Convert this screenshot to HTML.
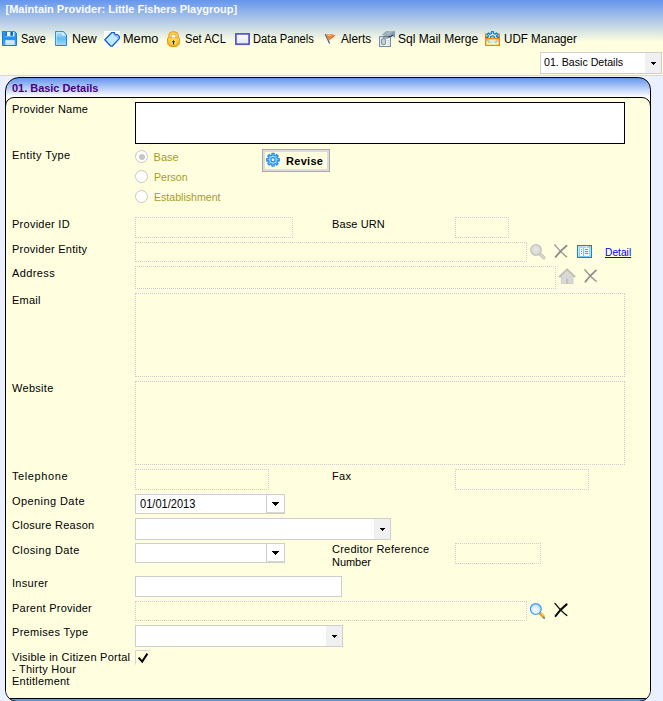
<!DOCTYPE html>
<html><head><meta charset="utf-8">
<style>
html,body{margin:0;padding:0;}
body{width:663px;height:701px;overflow:hidden;position:relative;background:#eaf0ff;font-family:"Liberation Sans",sans-serif;font-size:11px;color:#000;}
.abs{position:absolute;}
#top{left:0;top:0;width:663px;height:75px;background:linear-gradient(#6495ed 0px,#ffffe0 42px,#ffffe0 75px);}
#title{left:5.5px;top:3px;font-weight:bold;font-size:11px;color:#fbfcff;white-space:nowrap;line-height:13px;letter-spacing:0;}
.tb{transform-origin:0 0;top:31px;height:16px;line-height:16px;font-size:12px;white-space:nowrap;color:#000;}
#sel{left:540px;top:52px;width:122px;height:22px;background:#fff;border:1px solid #cfcfcf;box-sizing:border-box;}
#sel span{position:absolute;left:2.6px;top:3px;font-size:11px;line-height:13px;transform:scaleX(0.966);transform-origin:0 0;white-space:nowrap;}
.ddb{position:absolute;right:0;top:0;width:16px;height:100%;background:#f0f0f0;}
.arr{position:absolute;width:0;height:0;border-left:3.5px solid transparent;border-right:3.5px solid transparent;border-top:4px solid #000;}
#panel{left:5px;top:77px;width:646px;height:625px;box-sizing:border-box;border:1px solid #000;border-radius:14px 12.5px 12px 12px;background:linear-gradient(#6495ed 0px,#ffffff 19px,#ffffff 300px,#6495ed 300px);overflow:hidden;}
#body{left:-1px;top:19px;width:646px;height:602px;box-sizing:border-box;border:1px solid #000;border-radius:9px 9px 0 0;background:#ffffe0;}
#ptitle{left:12px;top:82px;font-weight:bold;color:#4b0082;line-height:13px;letter-spacing:-0.03px;white-space:nowrap;}
#bottom{display:none}
.lb{position:absolute;left:12px;line-height:13px;letter-spacing:0.3px;white-space:nowrap;}
.dot{position:absolute;box-sizing:border-box;border:1px dotted #cdcdd7;}
.inp{position:absolute;box-sizing:border-box;border:1px solid #cecece;background:#fff;}
.rad{position:absolute;width:13px;height:13px;box-sizing:border-box;border:1px solid #c9c9bd;border-radius:50%;background:#fff;}
.rl{position:absolute;left:153.6px;color:#a69d18;line-height:13px;transform-origin:0 0;white-space:nowrap;}
.arrs i{position:absolute;height:1px;background:#000;display:block;}
</style></head><body>
<div class="abs" style="left:5px;top:76px;width:646px;height:625px;background:#eef3ff"></div>
<div id="top" class="abs"></div>
<div class="abs" style="left:0;top:75px;width:663px;height:1px;background:#d8d8dc"></div>
<div id="title" class="abs">[Maintain Provider: Little Fishers Playgroup]</div>

<div class="abs tb" style="left:20.6px;transform:scaleX(0.9088)">Save</div>
<div class="abs tb" style="left:71.9px;transform:scaleX(1.0292)">New</div>
<div class="abs tb" style="left:122.9px;transform:scaleX(1.0601)">Memo</div>
<div class="abs tb" style="left:185.1px;transform:scaleX(0.9273)">Set ACL</div>
<div class="abs tb" style="left:253.2px;transform:scaleX(0.9312)">Data Panels</div>
<div class="abs tb" style="left:340.9px;transform:scaleX(0.9837)">Alerts</div>
<div class="abs tb" style="left:397.6px;transform:scaleX(1.0025)">Sql Mail Merge</div>
<div class="abs tb" style="left:503.7px;transform:scaleX(0.9668)">UDF Manager</div>

<div id="sel" class="abs"><span>01. Basic Details</span><div class="ddb" style="width:16px"></div></div>

<div id="panel" class="abs"><div id="body" class="abs"></div></div>
<div id="ptitle" class="abs">01. Basic Details</div>

<div class="lb" style="top:103px;letter-spacing:0.21px">Provider Name</div>
<div class="abs" style="left:135px;top:102px;width:490px;height:42px;box-sizing:border-box;border:1px solid #000;background:#fff"></div>

<div class="lb" style="top:149px;letter-spacing:0.40px">Entity Type</div>
<div class="rad" style="left:135px;top:150px"><div class="abs" style="left:2.5px;top:2.5px;width:6px;height:6px;border-radius:50%;background:#c6c6c6"></div></div>
<div class="rad" style="left:135px;top:170px"></div>
<div class="rad" style="left:135px;top:190px"></div>
<div class="rl" style="top:150.5px;transform:scaleX(1.0)">Base</div>
<div class="rl" style="top:170.5px;transform:scaleX(0.965)">Person</div>
<div class="rl" style="top:190.5px;transform:scaleX(0.962)">Establishment</div>
<div class="abs" id="revise" style="left:262px;top:149px;width:68px;height:23px;box-sizing:border-box;border:1px solid #a9a9a9;background:#ffffe0;"><div class="abs" style="left:0;top:0;right:0;bottom:0;border:2px solid #dcdcdc"></div><span class="abs m" style="left:23px;top:5px;font-weight:bold;line-height:13px;letter-spacing:0.3px;white-space:nowrap">Revise</span></div>

<div class="lb" style="top:218px;letter-spacing:0.26px">Provider ID</div>
<div class="dot" style="left:135px;top:217px;width:158px;height:21px"></div>
<div class="lb" style="left:332px;top:218px;letter-spacing:0.10px">Base URN</div>
<div class="dot" style="left:455px;top:217px;width:54px;height:21px"></div>

<div class="lb" style="top:243px;letter-spacing:0.25px">Provider Entity</div>
<div class="dot" style="left:135px;top:242px;width:392px;height:20px"></div>
<div class="abs m" style="left:605px;top:246px;color:#0000ff;text-decoration:underline;line-height:13px;transform:scaleX(0.93);transform-origin:0 0;white-space:nowrap">Detail</div>

<div class="lb" style="top:267px;letter-spacing:0.40px">Address</div>
<div class="dot" style="left:135px;top:266px;width:421px;height:23px"></div>

<div class="lb" style="top:294px;letter-spacing:0.25px">Email</div>
<div class="dot" style="left:135px;top:293px;width:490px;height:84px"></div>
<div class="lb" style="top:382px;letter-spacing:0.30px">Website</div>
<div class="dot" style="left:135px;top:381px;width:490px;height:84px"></div>

<div class="lb" style="top:470px;letter-spacing:0.60px">Telephone</div>
<div class="dot" style="left:135px;top:469px;width:134px;height:21px"></div>
<div class="lb" style="left:332px;top:470px;letter-spacing:0.30px">Fax</div>
<div class="dot" style="left:455px;top:469px;width:134px;height:21px"></div>

<div class="lb" style="top:495px;letter-spacing:0.42px">Opening Date</div>
<div class="inp" style="left:135px;top:494px;width:150px;height:20px"><span class="abs m" style="left:4.3px;top:2.5px;line-height:13px;font-size:12px;transform:scaleX(0.922);transform-origin:0 0;white-space:nowrap">01/01/2013</span><div class="ddb" style="width:18px;border-left:1px solid #cecece;border-bottom:1px solid #d6d6d6;background:#fff;box-sizing:border-box"></div></div>

<div class="lb" style="top:519px;letter-spacing:0.25px">Closure Reason</div>
<div class="inp" style="left:135px;top:518px;width:256px;height:22px"><div class="ddb"></div></div>

<div class="lb" style="top:544px;letter-spacing:0.40px">Closing Date</div>
<div class="inp" style="left:135px;top:543px;width:150px;height:20px"><div class="ddb" style="width:18px;border-left:1px solid #cecece;border-bottom:1px solid #d6d6d6;background:#fff;box-sizing:border-box"></div></div>
<div class="lb" style="left:332px;top:543px;letter-spacing:0.25px">Creditor Reference<br><span style="letter-spacing:-0.05px">Number</span></div>
<div class="dot" style="left:455px;top:543px;width:86px;height:21px"></div>

<div class="lb" style="top:577px;letter-spacing:0.30px">Insurer</div>
<div class="inp" style="left:135px;top:576px;width:207px;height:21px"></div>

<div class="lb" style="top:602px;letter-spacing:0.24px">Parent Provider</div>
<div class="dot" style="left:135px;top:601px;width:392px;height:20px"></div>

<div class="lb" style="top:626px;letter-spacing:0.30px">Premises Type</div>
<div class="inp" style="left:135px;top:625px;width:208px;height:22px"><div class="ddb"></div></div>

<div class="lb" style="top:651px;line-height:12px;letter-spacing:0.24px">Visible in Citizen Portal<br>- Thirty Hour<br>Entitlement</div>

<div class="arrs"><i style="left:651px;top:62px;width:5px"></i><i style="left:652px;top:63px;width:3px"></i><i style="left:653px;top:64px;width:1px"></i><i style="left:272px;top:502px;width:7px"></i><i style="left:273px;top:503px;width:5px"></i><i style="left:274px;top:504px;width:3px"></i><i style="left:275px;top:505px;width:1px"></i><i style="left:380px;top:528px;width:5px"></i><i style="left:381px;top:529px;width:3px"></i><i style="left:382px;top:530px;width:1px"></i><i style="left:272px;top:551px;width:7px"></i><i style="left:273px;top:552px;width:5px"></i><i style="left:274px;top:553px;width:3px"></i><i style="left:275px;top:554px;width:1px"></i><i style="left:332px;top:635px;width:5px"></i><i style="left:333px;top:636px;width:3px"></i><i style="left:334px;top:637px;width:1px"></i></div>
<!--ICONS-->
<svg class="abs" style="left:0;top:0;pointer-events:none" width="663" height="701" viewBox="0 0 663 701">
<defs>
<linearGradient id="gSave" x1="0" y1="0" x2="0" y2="1"><stop offset="0" stop-color="#2a9af0"/><stop offset="0.5" stop-color="#2096f0"/><stop offset="1" stop-color="#4eaef6"/></linearGradient>
<linearGradient id="gNew" x1="0" y1="0" x2="0" y2="1"><stop offset="0" stop-color="#c4e8fb"/><stop offset="0.5" stop-color="#62bcf6"/><stop offset="1" stop-color="#a8dcfa"/></linearGradient>
<linearGradient id="gLock" x1="0" y1="0" x2="0" y2="1"><stop offset="0" stop-color="#fdd560"/><stop offset="1" stop-color="#f5a81a"/></linearGradient>
<linearGradient id="gPan" x1="0" y1="0" x2="0" y2="1"><stop offset="0" stop-color="#ffffff"/><stop offset="1" stop-color="#e2e2ff"/></linearGradient>
<radialGradient id="gMagB" cx="0.45" cy="0.6" r="0.7"><stop offset="0" stop-color="#ffffff"/><stop offset="0.6" stop-color="#cfe8fb"/><stop offset="1" stop-color="#7cc0f5"/></radialGradient>
<radialGradient id="gMagG" cx="0.45" cy="0.45" r="0.7"><stop offset="0" stop-color="#e6e6e2"/><stop offset="1" stop-color="#d2d2ce"/></radialGradient>
<linearGradient id="gArr" x1="0" y1="0" x2="1" y2="0.6"><stop offset="0" stop-color="#6e8da4"/><stop offset="0.55" stop-color="#a9bcc9"/><stop offset="0.8" stop-color="#7d9aae"/><stop offset="1" stop-color="#6a899f"/></linearGradient>
</defs>

<!-- Save -->
<g transform="translate(2,31)">
<path d="M0.5 0.5 H12.6 L14.5 2.4 V14.5 H0.5Z" fill="url(#gSave)" stroke="#0b80e2" stroke-width="1"/>
<rect x="3.2" y="0.8" width="9.2" height="4.6" fill="#eaf6ff"/>
<rect x="3.2" y="0.8" width="1.7" height="4.2" fill="#0868cc"/>
<rect x="8.4" y="0.8" width="2.5" height="4" fill="#0560c8"/>
<rect x="3.4" y="9.2" width="9.2" height="4.6" fill="#e4f3fe"/>
<rect x="3.4" y="10.6" width="9.2" height="0.7" fill="#b4dcf8"/>
<rect x="3.4" y="12.2" width="9.2" height="0.7" fill="#b4dcf8"/>
</g>

<!-- New -->
<g transform="translate(55,31)">
<path d="M0.5 0.5 H8.2 L11.5 3.8 V14.5 H0.5Z" fill="url(#gNew)" stroke="#1584de" stroke-width="1"/>
<path d="M7.4 1.2 L10.8 4.6 H7.4Z" fill="#e4f6fe"/>
<path d="M1.3 1.3 H7.3 M1.3 1.3 V13.7" stroke="#d9f1fd" stroke-width="0.7" fill="none"/>
</g>

<!-- Memo -->
<rect x="104" y="31" width="16" height="16" fill="#ffffff"/>
<path d="M104.8 39.8 L111.6 32.7 H114.6 V34.6 H117.6 L119.4 36.6 V38.4 L112.2 46.2 H110.8 Z" fill="#bfeafa" stroke="#0c5fd6" stroke-width="1.3" stroke-linejoin="round"/>
<path d="M113.5 34 L118 37.6" stroke="#9d9ee8" stroke-width="1.2"/>

<!-- Lock -->
<g transform="translate(167,31)">
<path d="M2.9 7.5 V5.2 C2.9 2.8 4.2 1.9 6.5 1.9 C8.8 1.9 10.1 2.8 10.1 5.2 V7.5" fill="none" stroke="#eb9c0e" stroke-width="3.4"/>
<path d="M2.9 7.5 V5.2 C2.9 2.9 4.2 2 6.5 2 C8.8 2 10.1 2.9 10.1 5.2 V7.5" fill="none" stroke="#fdd660" stroke-width="1.4"/>
<rect x="4.7" y="3.9" width="3.6" height="2.5" fill="#eef6f2"/>
<path d="M0.6 7.2 H12.4 V11.6 C12.4 14.6 10 15.6 6.5 15.6 C3 15.6 0.6 14.6 0.6 11.6Z" fill="url(#gLock)" stroke="#e7940a" stroke-width="1"/>
<path d="M1.2 7.9 H11.8" stroke="#fde27a" stroke-width="0.9"/>
<circle cx="6.5" cy="11.2" r="2.7" fill="#ffe45a" opacity="0.9"/>
<path d="M6.5 9.2 L8 10.8 L7.1 11.6 V13.6 H5.9 V11.6 L5 10.8Z" fill="#222a44"/>
</g>

<!-- Data Panels -->
<rect x="235.9" y="33.9" width="13.2" height="10.3" fill="url(#gPan)" stroke="#5a5ad0" stroke-width="1.8"/>

<!-- Alerts flag -->
<path d="M325.3 34.2 L329.6 43.4" stroke="#28489c" stroke-width="1.1" fill="none"/>
<path d="M326 34.6 C327.4 33.8 328.8 35 330.4 34.2 C331.8 33.6 333.4 35 335.2 35.2 L329.4 40.4 L327.8 39.4Z" fill="#f0853a"/>
<path d="M327.6 35.4 C328.8 35 329.8 35.8 331 35.4" stroke="#fac49a" stroke-width="0.9" fill="none"/>
<path d="M335.2 35.2 L331.6 38.4" stroke="#b0603c" stroke-width="0.8" fill="none"/>

<!-- Sql mail merge -->
<rect x="379.6" y="36.7" width="10.8" height="9.8" fill="#ffffff" stroke="#6c8ca6" stroke-width="1.1"/>
<rect x="381.4" y="38.6" width="4.2" height="6.1" rx="1.6" fill="#c2ced6" stroke="#66829a" stroke-width="0.9"/>
<path d="M387.2 40.5 h2 M387.2 42.4 h2 M387.2 44.3 h2" stroke="#b0bfcc" stroke-width="0.8"/>
<path d="M382.4 37.4 L386.6 33 L390 37.2 L387.4 39.2 Z" fill="#4c6476" opacity="0.5"/>
<path d="M382 34.8 L386.2 31.1 H392.8 L394.9 30.8 V37.8 L392.6 35.9 C391 36.6 389.6 36.7 388.2 36.7 L386.6 33.8 L383.2 35.8 Z" fill="url(#gArr)"/>
<path d="M388.4 36.9 C390 36.7 391.8 36.3 392.8 35.4" stroke="#1e2a34" stroke-width="1" fill="none"/>

<!-- UDF Manager -->
<g transform="translate(485,31)">
<rect x="0.5" y="2.9" width="14" height="11.6" fill="#ffa32c" stroke="#f5850d" stroke-width="1"/>
<rect x="1.2" y="4" width="1.8" height="1.2" fill="#ffe24a"/>
<rect x="1.4" y="8.2" width="12.2" height="5.5" fill="#fff9a4"/>
<rect x="0.5" y="7.1" width="14" height="1.1" fill="#f5850d"/>
<clipPath id="cpU"><rect x="0" y="-1" width="15" height="8.1"/></clipPath>
<clipPath id="cpL"><rect x="0" y="8.5" width="15" height="3.6"/></clipPath>
<g clip-path="url(#cpU)">
<path d="M6.55 2.60 L6.49 0.68 L8.51 0.68 L8.45 2.60 L10.08 3.27 L11.40 1.88 L12.82 3.30 L11.43 4.62 L12.10 6.25 L14.02 6.19 L14.02 8.21 L12.10 8.15 L11.43 9.78 L12.82 11.10 L11.40 12.52 L10.08 11.13 L8.45 11.80 L8.51 13.72 L6.49 13.72 L6.55 11.80 L4.92 11.13 L3.60 12.52 L2.18 11.10 L3.57 9.78 L2.90 8.15 L0.98 8.21 L0.98 6.19 L2.90 6.25 L3.57 4.62 L2.18 3.30 L3.60 1.88 L4.92 3.27Z" fill="#eaf6ff" stroke="#1583dc" stroke-width="1.3" stroke-linejoin="round"/>
<circle cx="7.5" cy="7.2" r="2.3" fill="#ffc21e" stroke="#1583dc" stroke-width="1.3"/>
</g>
<g clip-path="url(#cpL)" opacity="0.6"><g transform="translate(0,16.4) scale(1,-1)">
<path d="M6.73 3.48 L6.68 1.86 L8.32 1.86 L8.27 3.48 L9.59 4.02 L10.69 2.84 L11.86 4.01 L10.68 5.11 L11.22 6.43 L12.84 6.38 L12.84 8.02 L11.22 7.97 L10.68 9.29 L11.86 10.39 L10.69 11.56 L9.59 10.38 L8.27 10.92 L8.32 12.54 L6.68 12.54 L6.73 10.92 L5.41 10.38 L4.31 11.56 L3.14 10.39 L4.32 9.29 L3.78 7.97 L2.16 8.02 L2.16 6.38 L3.78 6.43 L4.32 5.11 L3.14 4.01 L4.31 2.84 L5.41 4.02Z" fill="#cfe6f6" stroke="#5aa6e0" stroke-width="1.2" stroke-linejoin="round"/>
</g></g>
</g>

<!-- Revise gear -->
<g transform="translate(273,159.8)">
<path d="M-1.00 -4.49 L-1.08 -6.21 L1.08 -6.21 L1.00 -4.49 L2.46 -3.88 L3.63 -5.15 L5.15 -3.63 L3.88 -2.46 L4.49 -1.00 L6.21 -1.08 L6.21 1.08 L4.49 1.00 L3.88 2.46 L5.15 3.63 L3.63 5.15 L2.46 3.88 L1.00 4.49 L1.08 6.21 L-1.08 6.21 L-1.00 4.49 L-2.46 3.88 L-3.63 5.15 L-5.15 3.63 L-3.88 2.46 L-4.49 1.00 L-6.21 1.08 L-6.21 -1.08 L-4.49 -1.00 L-3.88 -2.46 L-5.15 -3.63 L-3.63 -5.15 L-2.46 -3.88Z" fill="#b4defb" stroke="#2b95ea" stroke-width="1.5" stroke-linejoin="round"/>
<circle cx="0" cy="0" r="2.1" fill="#f4fbf0" stroke="#2b95ea" stroke-width="1.4"/>
</g>

<!-- gray magnifier -->
<path d="M540.4 254.4 L543.7 257.7" stroke="#bfbfbb" stroke-width="3.4" stroke-linecap="round"/>
<path d="M540.4 254.4 L543.7 257.7" stroke="#d6d6d2" stroke-width="2" stroke-linecap="round"/>
<circle cx="536" cy="250" r="5.3" fill="url(#gMagG)" stroke="#c2c2be" stroke-width="1.2"/>
<!-- gray X 1 -->
<path d="M554.8 245 C558 248.6 562 253.4 566.6 256.8" stroke="#9c9c98" stroke-width="1.5" fill="none" stroke-linecap="round"/>
<path d="M566.6 245.8 C562.6 249 558.6 253 555.6 257" stroke="#8e8e8a" stroke-width="1.9" fill="none" stroke-linecap="round"/>
<!-- detail icon -->
<rect x="577.5" y="245.5" width="14" height="12" fill="#7cc6f8" stroke="#0f86e0" stroke-width="1"/>
<rect x="578.2" y="246.2" width="12.6" height="1.3" fill="#c6e9fd"/>
<rect x="578.2" y="247.5" width="1" height="9" fill="#d8f0fe"/>
<rect x="589.4" y="247.5" width="1.4" height="9" fill="#bfe5fc"/>
<rect x="586" y="246.2" width="0.9" height="1.2" fill="#ffffff"/>
<rect x="588.8" y="246" width="1.5" height="1.3" fill="#f09a3a"/>
<rect x="580" y="248" width="3" height="8" fill="#ffffff"/>
<rect x="584.2" y="248" width="4.8" height="8" fill="#ffffff"/>
<path d="M581 249.6 h1.1 M581 251.6 h1.1 M581 253.6 h1.1" stroke="#2a98ec" stroke-width="1"/>
<path d="M585 249.6 h3.2 M585 251.6 h3.2 M585 253.6 h3.2" stroke="#2a98ec" stroke-width="1"/>
<!-- home -->
<path d="M559.2 277 L567.1 269.6 L575 277" fill="none" stroke="#b9b9b5" stroke-width="1.9" stroke-linejoin="miter"/>
<path d="M561.3 275.6 L567.1 270.4 L572.9 275.6 V283.5 H561.3Z" fill="#d8d8d4" stroke="#c6c6c2" stroke-width="0.8"/>
<rect x="566.1" y="278.6" width="2" height="4.9" fill="#c0c0bc"/>
<!-- gray X 2 -->
<path d="M584.8 269.8 C588 273.4 591.8 278 596.2 281.2" stroke="#9c9c98" stroke-width="1.5" fill="none" stroke-linecap="round"/>
<path d="M596 270.4 C592 273.8 588.2 277.8 585.4 281.8" stroke="#8e8e8a" stroke-width="1.9" fill="none" stroke-linecap="round"/>
<!-- white line under address icons -->
<rect x="556" y="287.6" width="49" height="1" fill="#f4f4fb"/>

<!-- blue magnifier -->
<path d="M540.2 613.4 L543.4 616.6" stroke="#e9a21c" stroke-width="3.2" stroke-linecap="round"/>
<path d="M540.6 612.8 L544 616.2" stroke="#f8d488" stroke-width="0.9" stroke-linecap="round"/>
<path d="M543.6 617.6 L544.3 618.2" stroke="#2a8ee0" stroke-width="1.5" stroke-linecap="round"/>
<circle cx="535.8" cy="609.1" r="5.4" fill="url(#gMagB)" stroke="#3a9cf0" stroke-width="1.2"/>
<!-- black X -->
<path d="M555 603.4 C558 607.2 562 612 566.8 615.4" stroke="#161616" stroke-width="1.4" fill="none" stroke-linecap="round"/>
<path d="M566.6 604.4 C562.6 607.6 558.4 611.8 555.6 616" stroke="#0a0a0a" stroke-width="2.1" fill="none" stroke-linecap="round"/>

<!-- check -->
<path d="M135.5 664.5 V650.5 H150" fill="none" stroke="#d4d4da" stroke-width="1"/>
<path d="M138.6 657.6 L142.2 661.6 L147.4 653.6" fill="none" stroke="#000" stroke-width="2" stroke-linejoin="miter"/>
</svg>
<!--/ICONS-->
<div id="bottom" class="abs"></div>
</body></html>
